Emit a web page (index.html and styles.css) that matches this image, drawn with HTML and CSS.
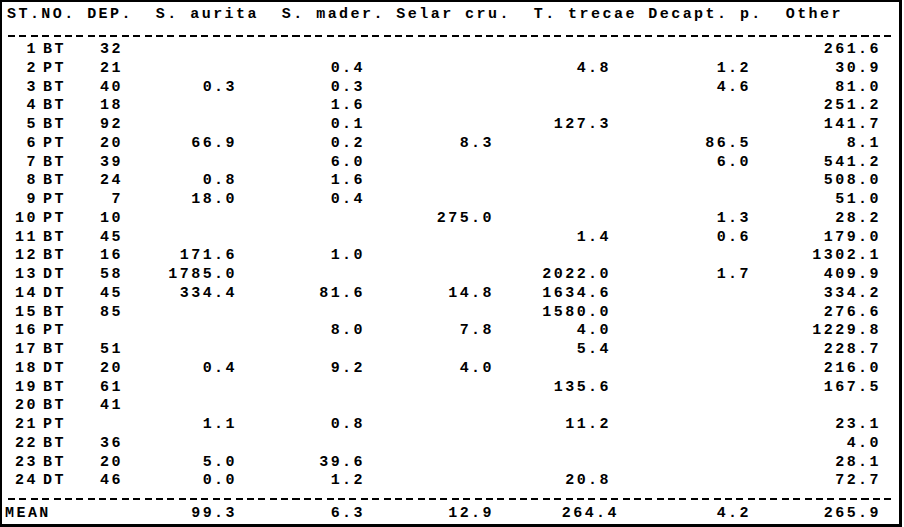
FILE: index.html
```html
<!DOCTYPE html>
<html lang="en">
<head>
<meta charset="UTF-8">
<meta name="viewport" content="width=device-width, initial-scale=1.0">
<title>Catch by station</title>
<link rel="stylesheet" href="styles.css">
</head>
<body>
<div class="sheet">
  <div class="line head">ST.NO. DEP.  S. aurita  S. mader. Selar cru.  T. trecae Decapt. p.  Other</div>
  <div class="rule"></div>

  <div class="row"><span>1</span><span>BT</span><span>32</span><span></span><span></span><span></span><span></span><span></span><span>261.6</span></div>
  <div class="row"><span>2</span><span>PT</span><span>21</span><span></span><span>0.4</span><span></span><span>4.8</span><span>1.2</span><span>30.9</span></div>
  <div class="row"><span>3</span><span>BT</span><span>40</span><span>0.3</span><span>0.3</span><span></span><span></span><span>4.6</span><span>81.0</span></div>
  <div class="row"><span>4</span><span>BT</span><span>18</span><span></span><span>1.6</span><span></span><span></span><span></span><span>251.2</span></div>
  <div class="row"><span>5</span><span>BT</span><span>92</span><span></span><span>0.1</span><span></span><span>127.3</span><span></span><span>141.7</span></div>
  <div class="row"><span>6</span><span>PT</span><span>20</span><span>66.9</span><span>0.2</span><span>8.3</span><span></span><span>86.5</span><span>8.1</span></div>
  <div class="row"><span>7</span><span>BT</span><span>39</span><span></span><span>6.0</span><span></span><span></span><span>6.0</span><span>541.2</span></div>
  <div class="row"><span>8</span><span>BT</span><span>24</span><span>0.8</span><span>1.6</span><span></span><span></span><span></span><span>508.0</span></div>
  <div class="row"><span>9</span><span>PT</span><span>7</span><span>18.0</span><span>0.4</span><span></span><span></span><span></span><span>51.0</span></div>
  <div class="row"><span>10</span><span>PT</span><span>10</span><span></span><span></span><span>275.0</span><span></span><span>1.3</span><span>28.2</span></div>
  <div class="row"><span>11</span><span>BT</span><span>45</span><span></span><span></span><span></span><span>1.4</span><span>0.6</span><span>179.0</span></div>
  <div class="row"><span>12</span><span>BT</span><span>16</span><span>171.6</span><span>1.0</span><span></span><span></span><span></span><span>1302.1</span></div>
  <div class="row"><span>13</span><span>DT</span><span>58</span><span>1785.0</span><span></span><span></span><span>2022.0</span><span>1.7</span><span>409.9</span></div>
  <div class="row"><span>14</span><span>DT</span><span>45</span><span>334.4</span><span>81.6</span><span>14.8</span><span>1634.6</span><span></span><span>334.2</span></div>
  <div class="row"><span>15</span><span>BT</span><span>85</span><span></span><span></span><span></span><span>1580.0</span><span></span><span>276.6</span></div>
  <div class="row"><span>16</span><span>PT</span><span></span><span></span><span>8.0</span><span>7.8</span><span>4.0</span><span></span><span>1229.8</span></div>
  <div class="row"><span>17</span><span>BT</span><span>51</span><span></span><span></span><span></span><span>5.4</span><span></span><span>228.7</span></div>
  <div class="row"><span>18</span><span>DT</span><span>20</span><span>0.4</span><span>9.2</span><span>4.0</span><span></span><span></span><span>216.0</span></div>
  <div class="row"><span>19</span><span>BT</span><span>61</span><span></span><span></span><span></span><span>135.6</span><span></span><span>167.5</span></div>
  <div class="row"><span>20</span><span>BT</span><span>41</span><span></span><span></span><span></span><span></span><span></span><span></span></div>
  <div class="row"><span>21</span><span>PT</span><span></span><span>1.1</span><span>0.8</span><span></span><span>11.2</span><span></span><span>23.1</span></div>
  <div class="row"><span>22</span><span>BT</span><span>36</span><span></span><span></span><span></span><span></span><span></span><span>4.0</span></div>
  <div class="row"><span>23</span><span>BT</span><span>20</span><span>5.0</span><span>39.6</span><span></span><span></span><span></span><span>28.1</span></div>
  <div class="row"><span>24</span><span>DT</span><span>46</span><span>0.0</span><span>1.2</span><span></span><span>20.8</span><span></span><span>72.7</span></div>

  <div class="rule rule-end"></div>
  <div class="row mean"><span class="label">MEAN</span><span>99.3</span><span>6.3</span><span>12.9</span><span class="wide">264.4</span><span>4.2</span><span>265.9</span></div>
</div>
</body>
</html>
```

FILE: styles.css
```css
body {
  margin: 0;
  background: #fff;
}

.sheet {
  width: 892px;
  padding: 2px 0 0 5px;
  border: 2px solid #000;
  border-right-width: 3px;
  border-bottom-width: 3px;
  font-family: "Liberation Mono", "Courier New", monospace;
  font-size: 15px;
  font-weight: bold;
  letter-spacing: 2.45px;
  line-height: 18.5px;
  color: #000;
}

.line {
  white-space: pre;
}

.head {
  padding-top: 2px;
}

/* typed row of hyphens */
.rule {
  width: 888px;
  height: 16.5px;
  margin-left: 1px;
  background: repeating-linear-gradient(90deg, #000 0 7px, transparent 7px 11.38px) 0 70% / 888px 2px no-repeat;
}

.rule-end {
  height: 14px;
  background-position: 0 55%;
}

.row {
  display: grid;
  grid-template-columns: 31px 46px 39px 114px 128px 129px 117px 140px 130px;
  height: 18.75px;
  line-height: 18.75px;
}

.row span {
  text-align: right;
  white-space: nowrap;
}

.row span:nth-child(2) {
  text-align: left;
  padding-left: 5px;
}

.mean {
  height: 18.5px;
  line-height: 18.5px;
}

.mean .label {
  grid-column: 1 / span 3;
  text-align: left;
  margin-left: -2px;
}

.mean span:nth-child(2) {
  text-align: right;
  padding-left: 0;
}

.mean .wide {
  margin-right: -8px;
}
```
